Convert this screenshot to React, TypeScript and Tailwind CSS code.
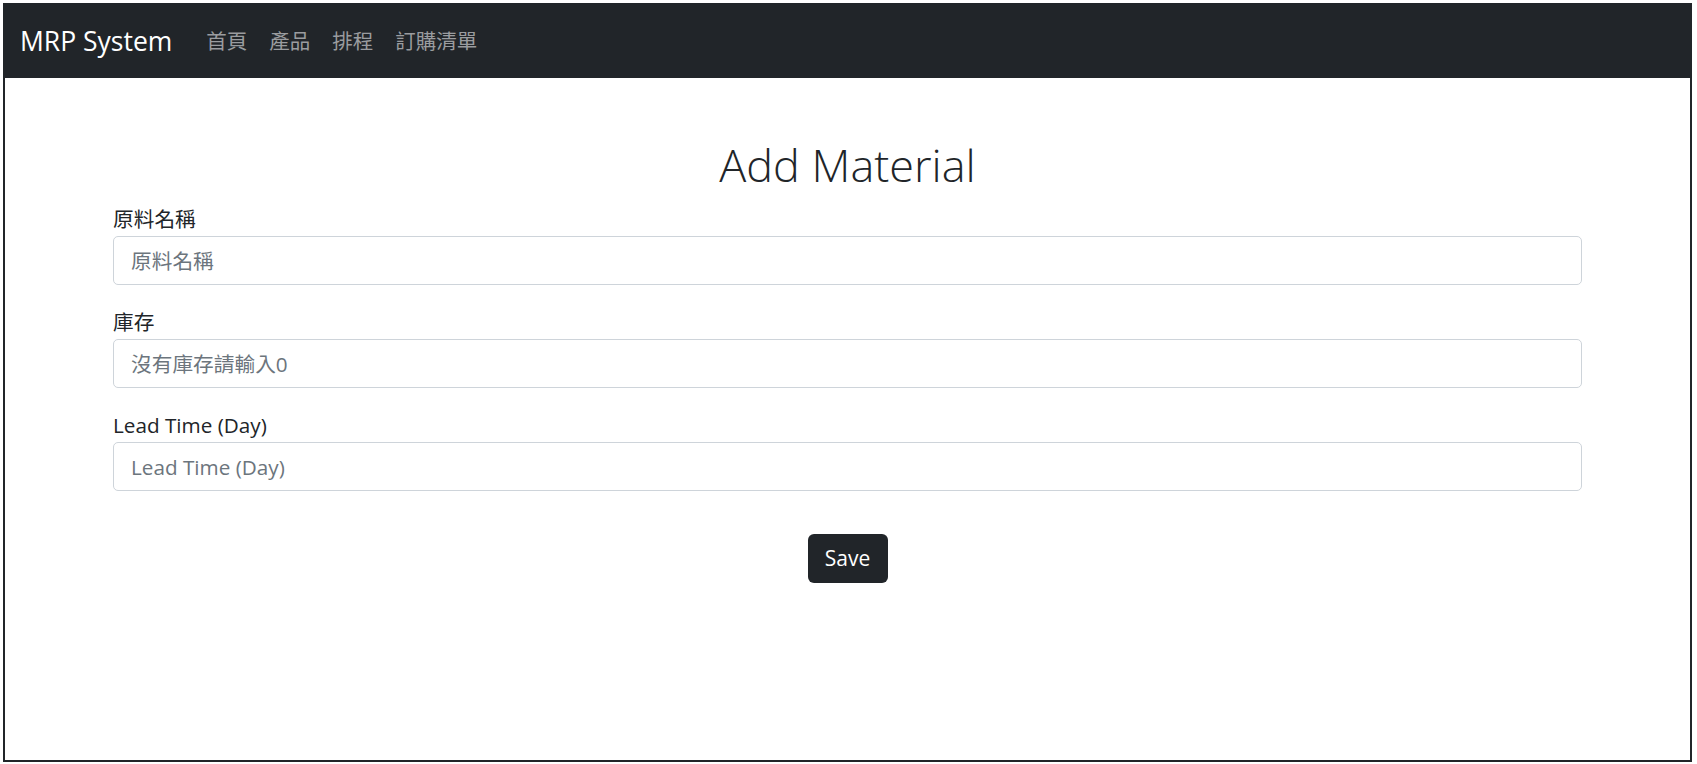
const navLinks = ["首頁", "產品", "排程", "訂購清單"];

const fields = [
  { label: "原料名稱", placeholder: "原料名稱" },
  { label: "庫存", placeholder: "沒有庫存請輸入0" },
  { label: "Lead Time (Day)", placeholder: "Lead Time (Day)" },
];

const font = "font-['Open_Sans','Noto_Sans_CJK_TC',sans-serif]";

export default function App() {
  return (
    <div className={`h-[764px] w-[1697px] bg-white pl-[3px] pt-[3px] text-[#212529] ${font}`}>
      <div className="flex h-[759px] w-[1689px] flex-col border-2 border-[#212529]">
        <nav className="flex h-[73px] shrink-0 items-center bg-[#212529] px-[15px]">
          <span className="mr-[23px] text-[26.5px] leading-none text-white">MRP System</span>
          <div className="flex">
            {navLinks.map((l) => (
              <a key={l} href="#" className="px-[11px] text-[20.5px] leading-none text-[#9a9c9f]">
                {l}
              </a>
            ))}
          </div>
        </nav>

        <main className="px-[108px] pt-[60px]">
          <h1 className="mb-[12px] text-center text-[45px] font-light leading-[54px]">Add Material</h1>
          <form className="flex flex-col">
            {fields.map((f) => (
              <div key={f.label} className="mb-[22px] flex flex-col">
                <label className="mb-[2px] text-[20.7px] leading-[30px]">{f.label}</label>
                <input
                  placeholder={f.placeholder}
                  className="h-[49px] rounded-[5px] border border-[#ced4da] px-[17px] text-[20.7px] outline-none placeholder:text-[#6c757d]"
                />
              </div>
            ))}
            <div className="mt-[21px] flex justify-center">
              <button
                type="button"
                className="h-[49px] w-[80px] rounded-[6px] bg-[#212529] text-[21px] text-white"
              >
                Save
              </button>
            </div>
          </form>
        </main>
      </div>
    </div>
  );
}
